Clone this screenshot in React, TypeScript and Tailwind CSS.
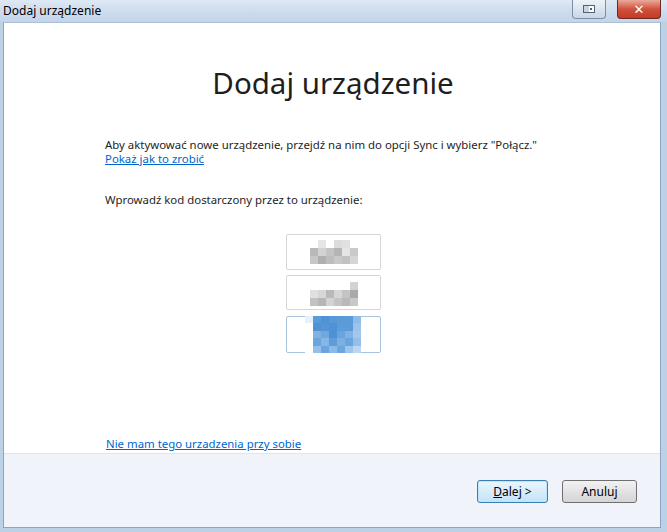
import React from 'react';

const box1 = [
  ['#fff', '#e6e6e6', '#fff', '#dcdcdc', '#e0e0e0', '#fff'],
  ['#b9b9b9', '#d2d2d2', '#c4c4c4', '#b5b5b5', '#e5e5e5', '#c9c9c9'],
  ['#c7c7c7', '#b0b0b0', '#bdbdbd', '#c8c8c8', '#c2c2c2', '#d6d6d6'],
];
const box2 = [
  ['#fff', '#fff', '#fff', '#fff', '#fff', '#d2d2d2'],
  ['#e0e0e0', '#d7d7d7', '#b9b9b9', '#d6d6d6', '#c4c4c4', '#a9a9a9'],
  ['#c2c2c2', '#b6b6b6', '#d3d3d3', '#c4c4c4', '#b9b9b9', '#c8c8c8'],
];
const box3 = [
  ['#e8f1fa', '#5b9bd9', '#4e92d6', '#5898d8', '#5a9ad9', '#5b9bd9', '#8fbce6'],
  ['#ffffff', '#4f93d6', '#5595d7', '#4e92d6', '#5d9cd9', '#5b9bd9', '#9cc3ea'],
  ['#ffffff', '#7fb1e2', '#6fa8df', '#4e92d6', '#6aa4de', '#80b3e3', '#a3c7ea'],
  ['#ffffff', '#6ba5de', '#86b6e4', '#5e9ddb', '#7db0e2', '#6aa4de', '#95bfe8'],
  ['#ffffff', '#96c0e8', '#6ba5de', '#8cbae6', '#6ca6de', '#9fc5ea', '#bcd7f0'],
];

function Mosaic({ rows, h = 8 }: { rows: string[][]; h?: number }) {
  return (
    <div className="flex flex-col">
      {rows.map((r, i) => (
        <div key={i} className="flex">
          {r.map((c, j) => (
            <div key={j} className="w-[8px]" style={{ backgroundColor: c, height: h }} />
          ))}
        </div>
      ))}
    </div>
  );
}

export default function App() {
  return (
    <div
      className="w-[667px] h-[532px] bg-[#bcd0e6] flex flex-col overflow-hidden"
      style={{ fontFamily: '"Noto Sans", "Open Sans", sans-serif' }}
    >
      {/* Title bar */}
      <div className="h-[22px] flex items-start bg-gradient-to-b from-[#dfe9f5] via-[#cfdced] to-[#c3d4ea]">
        <div className="pl-[3px] pt-[4px] text-[12px] leading-[14px] text-black">Dodaj urządzenie</div>
        <div className="ml-auto flex items-start gap-[11px] mr-[6px]">
          <div className="w-[34px] h-[19px] rounded-b-[4px] border border-t-0 border-[#7d8ea6] bg-gradient-to-b from-[#eef3f9] to-[#c9d6e6] flex items-center justify-center">
            <div className="w-[12px] h-[8px] border border-[#50627a] bg-white flex">
              <div className="w-[5px] h-full bg-[#c9d3df]" />
              <div className="w-[2px] h-[2px] bg-[#50627a] mt-[2px] ml-[1px]" />
            </div>
          </div>
          <div className="w-[44px] h-[19px] rounded-b-[4px] border border-t-0 border-[#6e2a22] bg-gradient-to-b from-[#e9a99a] via-[#d0513c] to-[#c23a24] flex items-center justify-center">
            <span className="text-white font-bold text-[13px] leading-none" style={{ fontFamily: '"DejaVu Sans", sans-serif' }}>
              ✕
            </span>
          </div>
        </div>
      </div>

      {/* Body */}
      <div className="flex-1 flex pl-[3px] pr-[6px] pb-[4px]">
        <div className="flex-1 flex flex-col border border-[#8ea4c1] border-t-[#aebfd6]">
          <div className="flex-1 bg-white flex flex-col">
            <h1 className="text-center text-[29.5px] leading-[40px] text-[#1e1e1e] mt-[40px] font-normal pl-[2px]">
              Dodaj urządzenie
            </h1>
            <div className="pl-[101px] mt-[35px] text-[11.4px] leading-[14px] text-[#1e1e1e]">
              <p>Aby aktywować nowe urządzenie, przejdź na nim do opcji Sync i wybierz "Połącz."</p>
              <a className="block w-fit text-[#0066cc] underline">Pokaż jak to zrobić</a>
              <p className="mt-[27px]">Wprowadź kod dostarczony przez to urządzenie:</p>
            </div>
            <div className="flex flex-col items-center gap-[5px] mt-[27px] pl-[3px]">
              <div className="w-[95px] h-[36px] border border-[#d6d6d6] rounded-[2px] flex items-center justify-center">
                <Mosaic rows={box1} />
              </div>
              <div className="w-[95px] h-[35px] border border-[#d6d6d6] rounded-[2px] flex items-end justify-center pb-[3px]">
                <Mosaic rows={box2} />
              </div>
              <div className="w-[95px] h-[37px] border border-[#a9c2de] rounded-[2px] flex items-start justify-center mt-[1px]">
                <div className="-mt-px pr-[2px]">
                  <Mosaic rows={box3} h={7.4} />
                </div>
              </div>
            </div>
            <div className="mt-auto pl-[102px] pb-[2px] text-[11.4px] leading-[15px]">
              <a className="text-[#0066cc] underline">Nie mam tego urzadzenia przy sobie</a>
            </div>
          </div>
          <div className="h-[74px] bg-[#f0f4fa] border-t border-[#dde5ef] flex items-start justify-end pt-[26px] pr-[23px] gap-[14px]">
            <button className="w-[71px] h-[23px] rounded-[3px] border border-[#3c7fb1] bg-gradient-to-b from-[#eaf6fd] to-[#c3e3f7] text-[12px] text-black shadow-[inset_0_0_0_1px_#bfe4f8]">
              <span className="underline">D</span>alej &gt;
            </button>
            <button className="w-[75px] h-[23px] rounded-[3px] border border-[#707070] bg-gradient-to-b from-[#f2f2f2] to-[#d4d4d4] text-[12px] text-black">
              Anuluj
            </button>
          </div>
        </div>
      </div>
    </div>
  );
}
